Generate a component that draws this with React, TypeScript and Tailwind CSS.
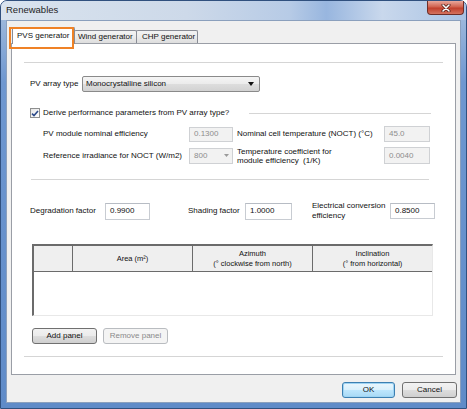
import type { ReactNode } from 'react';

function CloseButton() {
  return (
    <div className="mr-[2px] flex h-[14px] w-[37px] items-center justify-center self-start rounded-b-[4px] border border-t-0 border-[#6e2d27] bg-[linear-gradient(180deg,#e8a89c_0%,#d0624f_45%,#c0402d_55%,#d4735f_100%)]">
      <svg width="10" height="8" viewBox="0 0 10 8">
        <path d="M2 1 L8 7 M8 1 L2 7" stroke="#4a1a15" strokeWidth="3" strokeLinecap="round" />
        <path d="M2 1 L8 7 M8 1 L2 7" stroke="#ffffff" strokeWidth="1.6" strokeLinecap="round" />
      </svg>
    </div>
  );
}

function Tab({ label, active, className = '' }: { label: string; active?: boolean; className?: string }) {
  if (active) {
    return (
      <div
        className={`relative z-10 -mb-px flex h-[17px] items-center rounded-t-[2px] border border-b-0 border-[#898c95] bg-white pl-[4px] ${className}`}
      >
        {label}
      </div>
    );
  }
  return (
    <div
      className={`flex h-[13px] items-center rounded-t-[2px] border border-b-0 border-[#898c95] bg-[linear-gradient(180deg,#f3f3f3_0%,#ebebeb_50%,#dddddd_100%)] pl-[3px] ${className}`}
    >
      {label}
    </div>
  );
}

function Field({
  value,
  width,
  height = 'h-[16px]',
  disabled,
}: {
  value: string;
  width: string;
  height?: string;
  disabled?: boolean;
}) {
  return (
    <div
      className={`flex shrink-0 items-center pl-[4px] ${width} ${height} ${
        disabled
          ? 'border border-[#cfd1d4] bg-[#f2f2f2] text-[#8d8d8d]'
          : 'border border-[#c8ccd2] border-t-[#b7bcc4] bg-white text-[#111]'
      }`}
    >
      {value}
    </div>
  );
}

function Button({
  children,
  width,
  disabled,
  primary,
}: {
  children: ReactNode;
  width: string;
  disabled?: boolean;
  primary?: boolean;
}) {
  let look =
    'border-[#707070] bg-[linear-gradient(180deg,#f2f2f2_0%,#ebebeb_50%,#dddddd_51%,#cfcfcf_100%)] text-[#111]';
  if (disabled) look = 'border-[#b9bcc0] bg-[#f4f4f4] text-[#8a8a8a]';
  if (primary)
    look =
      'border-[#3c7fb1] bg-[linear-gradient(180deg,#eaf6fd_0%,#d9f0fc_50%,#bee6fd_51%,#a7d9f5_100%)] text-[#111] shadow-[inset_0_0_0_1px_#9fd4f3]';
  return (
    <div className={`flex h-[16px] shrink-0 items-center justify-center rounded-[3px] border ${width} ${look}`}>
      {children}
    </div>
  );
}

function Separator({ className = '' }: { className?: string }) {
  return <div className={`h-px bg-[#d5d5d5] ${className}`} />;
}

function PanelTable() {
  return (
    <div className="ml-[20px] mt-[24px] flex h-[72px] w-[401px] flex-col border-l-2 border-t-2 border-[#6b6b6b] border-b border-r border-b-[#e8e8e8] border-r-[#e8e8e8] text-[7.5px] leading-[10px]">
      <div className="flex h-[26px] border-b border-[#6b6b6b] bg-[#efefef]">
        <div className="w-[39px] border-r border-[#6b6b6b]" />
        <div className="flex w-[120px] items-center justify-center border-r border-[#6b6b6b]">Area (m²)</div>
        <div className="flex w-[120px] flex-col items-center justify-center border-r border-[#6b6b6b]">
          <span>Azimuth</span>
          <span>(° clockwise from north)</span>
        </div>
        <div className="flex flex-1 flex-col items-center justify-center">
          <span>Inclination</span>
          <span>(° from horizontal)</span>
        </div>
      </div>
      <div className="flex-1 bg-white" />
    </div>
  );
}

export default function App() {
  return (
    <div className="h-[409px] w-[467px] bg-white font-['Liberation_Sans',Arial,sans-serif] text-[8px] text-[#111]">
      <div className="flex h-full flex-col rounded-t-[7px] border border-[#30507e] bg-[linear-gradient(180deg,#a9c0df_0%,#6e97d0_20%,#5f8bc8_100%)]">
        {/* title bar */}
        <div className="flex h-[19px] items-center justify-between rounded-t-[6px] bg-[linear-gradient(90deg,#d9e3ee_0%,#cdd9e9_40%,#b7cbe6_62%,#98b6df_70%,#c9d8ec_82%,#a8c2e4_100%)] pl-[5px]">
          <span className="text-[9.5px] text-[#1e1e1e]">Renewables</span>
          <CloseButton />
        </div>

        {/* client area */}
        <div className="mx-[5px] mb-[5px] flex flex-1 flex-col border border-[#8ba0bd] bg-[#f0f0f0] px-[4px]">
          <div className="relative ml-px mt-[6px] flex h-[16px] items-end">
            <Tab label="PVS generator" active className="w-[63px]" />
            <Tab label="Wind generator" className="-ml-px w-[63px]" />
            <Tab label="CHP generator" className="-ml-px w-[62px] pl-[5px]" />
            <div className="pointer-events-none absolute left-[-3px] top-0 z-20 h-[22px] w-[65px] border-2 border-[#ef8226]" />
          </div>

          <div className="flex h-[332px] flex-col border border-[#9a9ea6] bg-white">
            <Separator className="mx-[12px] mt-[18px]" />

            <div className="ml-[18px] mt-[13px] flex h-[16px] items-center">
              <span className="w-[52px]">PV array type</span>
              <div className="flex h-[16px] w-[178px] items-center justify-between rounded-[2px] border border-[#8a8a8a] bg-[linear-gradient(180deg,#f5f5f5_0%,#ebebeb_50%,#dddddd_51%,#d2d2d2_100%)] pl-[3px] pr-[5px]">
                <span>Monocrystalline silicon</span>
                <svg width="6" height="4" viewBox="0 0 6 4">
                  <path d="M0 0 H6 L3 4 Z" fill="#111" />
                </svg>
              </div>
            </div>

            <div className="ml-[18px] mt-[16px] flex h-[10px] items-center">
              <div className="flex h-[10px] w-[10px] items-center justify-center border border-[#8e8f8f] bg-[linear-gradient(135deg,#e6e6e6_0%,#ffffff_100%)]">
                <svg width="8" height="7" viewBox="0 0 8 7">
                  <path d="M1 3.6 L3 5.6 L7 1" stroke="#2b4a8a" strokeWidth="1.6" fill="none" />
                </svg>
              </div>
              <span className="ml-[3px]">Derive performance parameters from PV array type?</span>
              <Separator className="ml-[20px] mr-[24px] flex-1" />
            </div>

            <div className="ml-[31px] mt-[8px] flex h-[16px] items-center">
              <span className="w-[146px]">PV module nominal efficiency</span>
              <Field value="0.1300" width="w-[44px]" height="h-[15px]" disabled />
              <span className="ml-[4px] w-[147px]">Nominal cell temperature (NOCT) (°C)</span>
              <Field value="45.0" width="w-[46px]" disabled />
            </div>

            <div className="ml-[31px] mt-[5px] flex h-[17px] items-center">
              <span className="w-[146px]">Reference irradiance for NOCT (W/m2)</span>
              <div className="flex h-[16px] w-[44px] shrink-0 items-center justify-between border border-[#cfd1d4] bg-[#f2f2f2] pl-[4px] pr-[3px] text-[#8d8d8d]">
                <span>800</span>
                <svg width="5" height="3" viewBox="0 0 5 3">
                  <path d="M0 0 H5 L2.5 3 Z" fill="#9a9a9a" />
                </svg>
              </div>
              <span className="ml-[4px] flex w-[147px] flex-col leading-[9px]">
                <span>Temperature coefficient for</span>
                <span>module efficiency&nbsp; (1/K)</span>
              </span>
              <Field value="0.0040" width="w-[46px]" height="h-[17px]" disabled />
            </div>

            <Separator className="ml-[19px] mr-[26px] mt-[15px]" />

            <div className="ml-[18px] mt-[22px] flex h-[18px] items-center">
              <span className="w-[75px]">Degradation factor</span>
              <Field value="0.9900" width="w-[45px]" height="h-[17px]" />
              <span className="ml-[38px] w-[57px]">Shading factor</span>
              <Field value="1.0000" width="w-[47px]" height="h-[17px]" />
              <span className="ml-[20px] flex w-[78px] flex-col leading-[10px]">
                <span>Electrical conversion</span>
                <span>efficiency</span>
              </span>
              <Field value="0.8500" width="w-[45px]" />
            </div>

            <PanelTable />

            <div className="ml-[20px] mt-[12px] flex gap-[6px]">
              <Button width="w-[65px]">Add panel</Button>
              <Button width="w-[65px]" disabled>
                Remove panel
              </Button>
            </div>

            <Separator className="mx-[12px] mt-[12px]" />
          </div>

          <div className="-mr-px mt-[7px] flex justify-end gap-[7px]">
            <Button width="w-[53px]" primary>
              OK
            </Button>
            <Button width="w-[55px]">Cancel</Button>
          </div>
        </div>
      </div>
    </div>
  );
}
